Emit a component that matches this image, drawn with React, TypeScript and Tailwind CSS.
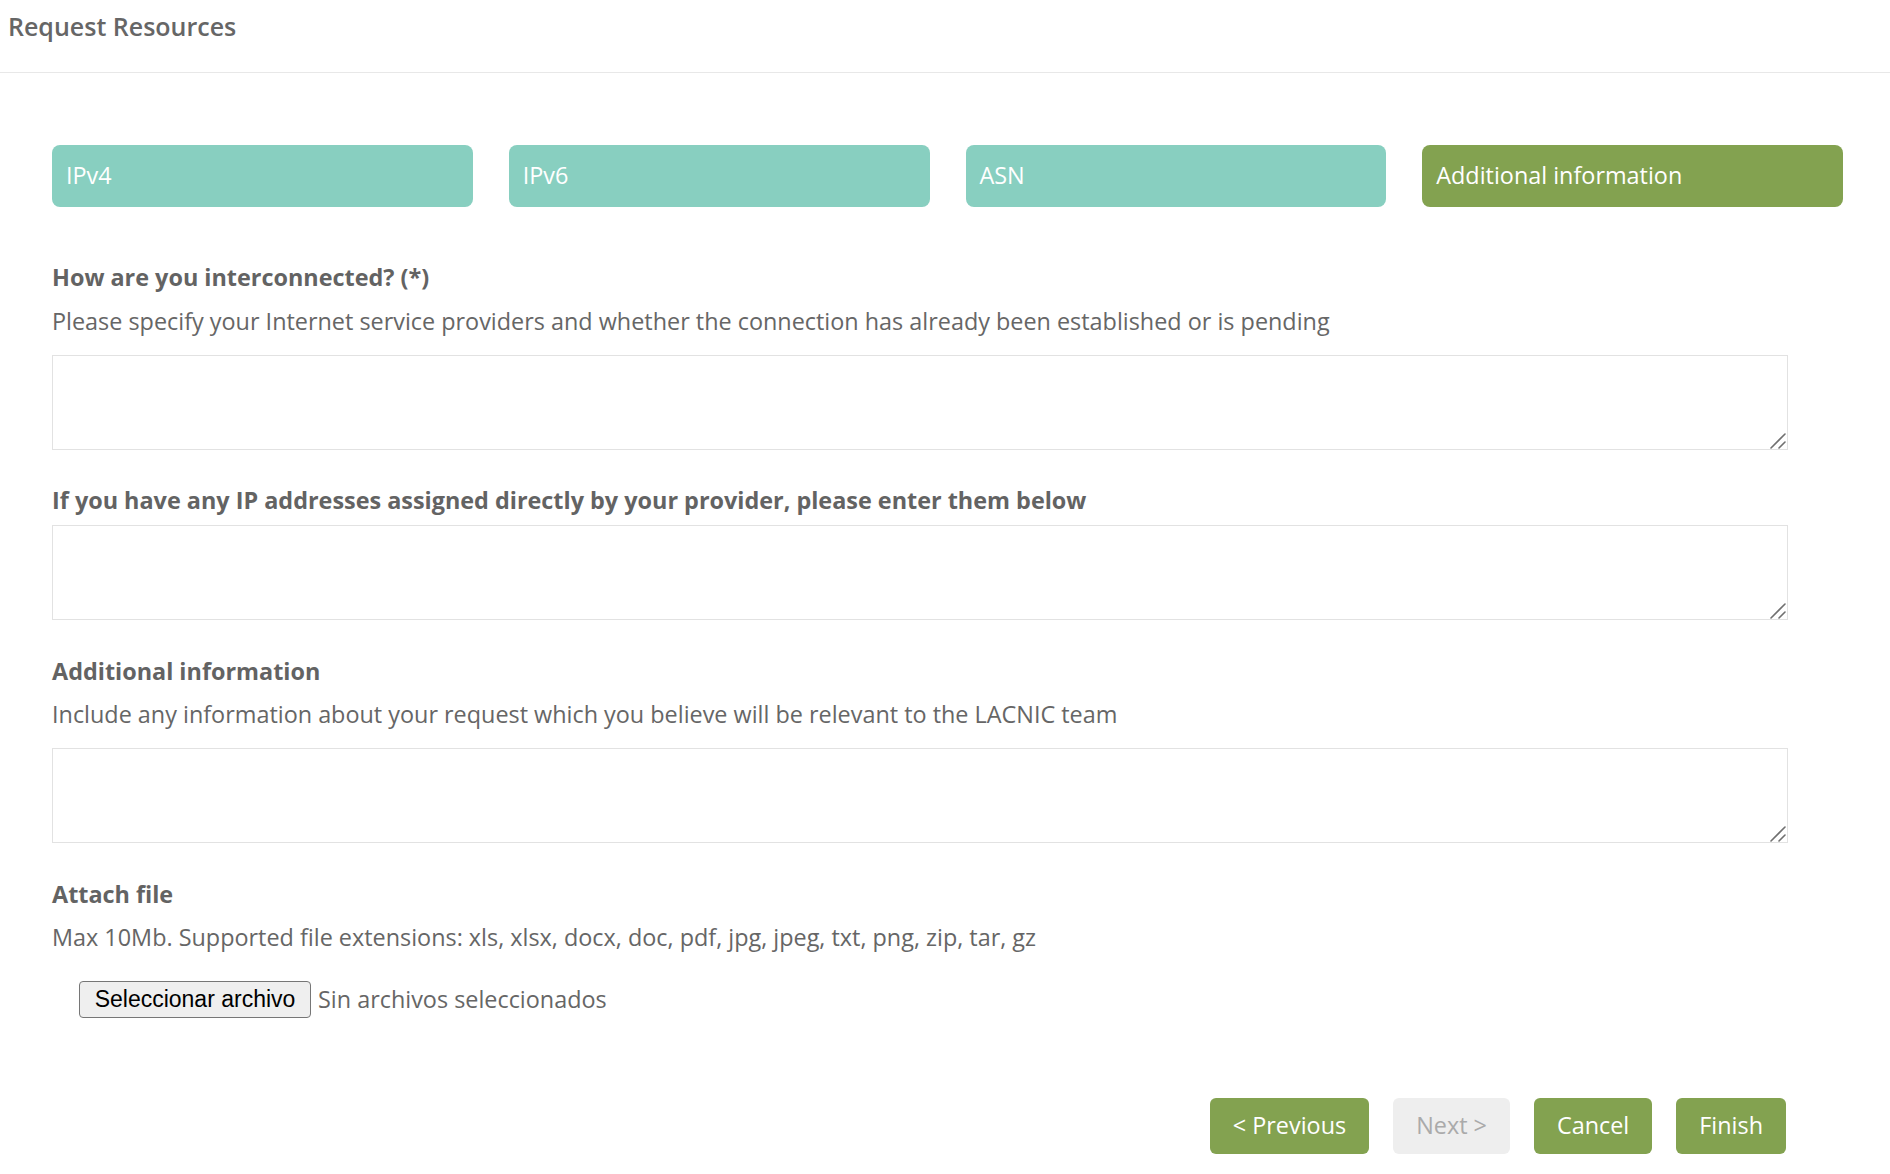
import React from "react";

const font = { fontFamily: "'Open Sans', 'Noto Sans', sans-serif" };

const tabs = [
  { label: "IPv4", active: false },
  { label: "IPv6", active: false },
  { label: "ASN", active: false },
  { label: "Additional information", active: true },
];

function Label(props: { children: React.ReactNode; className?: string }) {
  return (
    <div
      className={`text-[23.4px] leading-[32px] font-bold text-[#636363] ${props.className ?? ""}`}
    >
      {props.children}
    </div>
  );
}

function Help(props: { children: React.ReactNode; className?: string }) {
  return (
    <div
      className={`text-[23.4px] leading-[32px] text-[#666666] ${props.className ?? ""}`}
    >
      {props.children}
    </div>
  );
}

// textarea with the mac-style grip drawn over its corner
function Area(props: { className?: string }) {
  return (
    <div className={`relative w-[1736px] h-[95px] ${props.className ?? ""}`}>
      <textarea className="block w-full h-full border border-[#e2e2e2] bg-white outline-none resize-none" />
      <svg
        className="absolute right-[2px] bottom-[1px] pointer-events-none"
        width="16"
        height="16"
        viewBox="0 0 16 16"
      >
        <path
          d="M1 15 L15 1 M9 15 L15 9"
          stroke="#707070"
          strokeWidth="1.6"
          strokeLinecap="round"
        />
      </svg>
    </div>
  );
}

export default function App() {
  return (
    <div className="min-h-screen bg-white" style={font}>
      <div className="h-[73px] border-b border-[#e8e8e8] pl-[8px] pt-[10px]">
        <h1 className="text-[25px] leading-[32px] font-semibold text-[#666666]">
          Request Resources
        </h1>
      </div>

      <div className="pl-[52px]">
        <div className="mt-[72px] grid grid-cols-4 gap-[36px] w-[1791px]">
          {tabs.map((t) => (
            <div
              key={t.label}
              className={`h-[62px] rounded-[8px] flex items-center pl-[14px] text-[23.4px] text-white ${
                t.active ? "bg-[#83a250]" : "bg-[#88cfc0]"
              }`}
            >
              {t.label}
            </div>
          ))}
        </div>

        <Label className="mt-[54px]">How are you interconnected? (*)</Label>
        <Help className="mt-[12px]">
          Please specify your Internet service providers and whether the
          connection has already been established or is pending
        </Help>
        <Area className="mt-[18px]" />

        <Label className="mt-[34px]">
          If you have any IP addresses assigned directly by your provider,
          please enter them below
        </Label>
        <Area className="mt-[9px]" />

        <Label className="mt-[35px]">Additional information</Label>
        <Help className="mt-[11px]">
          Include any information about your request which you believe will be
          relevant to the LACNIC team
        </Help>
        <Area className="mt-[18px]" />

        <Label className="mt-[35px]">Attach file</Label>
        <Help className="mt-[11px]">
          Max 10Mb. Supported file extensions: xls, xlsx, docx, doc, pdf, jpg,
          jpeg, txt, png, zip, tar, gz
        </Help>

        <div className="mt-[28px] ml-[27px] flex items-center gap-[7px]">
          <button
            type="button"
            className="h-[37px] w-[232px] rounded-[4px] border border-[#767676] bg-[#efefef] text-[23px] text-black"
            style={{ fontFamily: "'Liberation Sans', Arial, sans-serif" }}
          >
            Seleccionar archivo
          </button>
          <span className="text-[23.4px] text-[#666666]">
            Sin archivos seleccionados
          </span>
        </div>

        <div className="mt-[80px] w-[1734px] flex justify-end gap-[24px] pb-[20px]">
          <button className="h-[56px] px-[23px] rounded-[6px] bg-[#83a250] text-white text-[23.4px]">
            &lt; Previous
          </button>
          <button className="h-[56px] px-[23px] rounded-[6px] bg-[#eeeeee] text-[#aaaaaa] text-[23.4px]">
            Next &gt;
          </button>
          <button className="h-[56px] px-[23px] rounded-[6px] bg-[#83a250] text-white text-[23.4px]">
            Cancel
          </button>
          <button className="h-[56px] px-[23px] rounded-[6px] bg-[#83a250] text-white text-[23.4px]">
            Finish
          </button>
        </div>
      </div>
    </div>
  );
}
